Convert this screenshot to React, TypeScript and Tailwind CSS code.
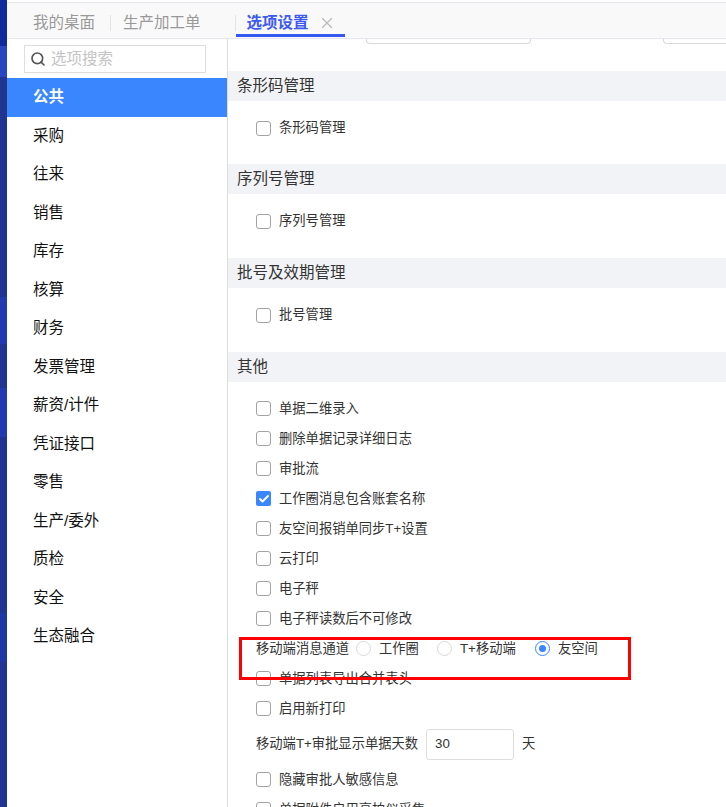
import { Search, X, Check } from "lucide-react";

const navItems = ["采购", "往来", "销售", "库存", "核算", "财务", "发票管理", "薪资/计件", "凭证接口", "零售", "生产/委外", "质检", "安全", "生态融合"];

function Box({ label, checked, flush }: { label: string; checked?: boolean; flush?: boolean }) {
  return (
    <div className="flex h-[30px] items-center gap-2">
      {checked ? (
        <span className="flex h-[15px] w-[15px] items-center justify-center rounded-[2px] bg-[#3a86ff]">
          <Check className="h-3 w-3 text-white" strokeWidth={4} />
        </span>
      ) : (
        <span className="h-[15px] w-[15px] rounded-[3px] border border-[#a3a3a3] bg-white" />
      )}
      <span className={flush ? "" : "pt-px"}>{label}</span>
    </div>
  );
}

function Radio({ label, on, className }: { label: string; on?: boolean; className: string }) {
  return (
    <div className={`flex items-center gap-2 ${className}`}>
      {on ? (
        <span className="flex h-[15px] w-[15px] items-center justify-center rounded-full border border-[#3a86ff]">
          <span className="h-[7px] w-[7px] rounded-full bg-[#3a86ff]" />
        </span>
      ) : (
        <span className="h-[15px] w-[15px] rounded-full border border-[#d9d9d9]" />
      )}
      <span>{label}</span>
    </div>
  );
}

function Section({ title, item, className }: { title: string; item: string; className: string }) {
  return (
    <div className={className}>
      <div className="flex h-[30px] items-center bg-[#f2f3f7] pl-[9px] text-[15.5px]">{title}</div>
      <div className="pl-7 pt-[12px]">
        <Box label={item} flush />
      </div>
    </div>
  );
}

export default function App() {
  return (
    <div className="flex h-[807px] w-[726px] overflow-hidden bg-white font-['Liberation_Sans','Noto_Sans_CJK_SC',sans-serif] text-[13.3px] text-[#333]">
      {/* left edge of the app menu */}
      <div className="flex w-[7px] shrink-0 flex-col bg-[#20358f]">
        <div className="h-[46px] bg-[#0f2a9c]" />
        <div className="h-[31px] bg-[#2a45c0]" />
        <div className="mt-[220px] h-[47px] bg-[#2339b0]" />
        <div className="mt-[44px] h-[49px] bg-[#2339b0]" />
        <div className="mt-[176px] h-[49px] bg-[#1f37a5]" />
      </div>

      <div className="flex min-w-0 flex-1 flex-col">
        {/* Tabs */}
        <div className="mt-[2px] flex h-[37px] shrink-0 items-center border-y border-[#e6e6ec] bg-[#f9f9f9] pl-[26px] pt-1 text-[15.5px] text-[#999]">
          <span>我的桌面</span>
          <span className="ml-[15px] mr-[12px] h-[16px] w-px bg-[#e3e3e3]" />
          <span>生产加工单</span>
          <span className="ml-[34px] h-[16px] w-px bg-[#e3e3e3]" />
          <div className="relative flex h-full w-[109px] items-center pl-[11px] font-bold text-[#3d5af1]">
            <span>选项设置</span>
            <X className="ml-[9px] h-[18px] w-[18px] text-[#bbb]" strokeWidth={1.75} />
            <span className="absolute bottom-[1px] left-0 h-[3px] w-full bg-[#3558f0]" />
          </div>
        </div>

        <div className="flex min-h-0 flex-1">
          {/* Side nav */}
          <aside className="w-[221px] shrink-0 border-r border-[#dcdcdc]">
            <div className="flex h-[39px] items-center pl-[17px]">
              <div className="flex h-[28px] w-[182px] items-center gap-[5px] border border-[#dedede] pl-[5px] text-[#c4c4c4]">
                <Search className="h-4 w-4 text-[#555]" strokeWidth={2.5} />
                <span className="text-[15.5px]">选项搜索</span>
              </div>
            </div>
            <div className="flex h-[39px] items-center bg-[#3a86ff] pb-[2px] pl-[26px] text-[15.5px] font-bold text-white">公共</div>
            {navItems.map((item) => (
              <div key={item} className="flex h-[38.5px] items-center pb-[2px] pl-[26px] text-[15.5px] text-[#111]">
                {item}
              </div>
            ))}
          </aside>

          {/* Options */}
          <main className="relative min-w-0 flex-1 overflow-hidden">
            <div className="flex h-[32px] items-start">
              <div className="ml-[138px] h-[5px] w-[165px] shrink-0 rounded-b-[4px] border-x border-b border-[#d9d9d9]" />
              <div className="ml-[132px] h-[5px] w-[70px] shrink-0 rounded-bl-[4px] border-b border-l border-[#d9d9d9]" />
            </div>
            <Section title="条形码管理" item="条形码管理" className="h-[93px]" />
            <Section title="序列号管理" item="序列号管理" className="h-[94px]" />
            <Section title="批号及效期管理" item="批号管理" className="h-[94px]" />
            <div className="flex h-[30px] items-center bg-[#f2f3f7] pl-[9px] text-[15.5px]">其他</div>
            <div className="pl-7 pt-[11.5px]">
              <Box label="单据二维录入" />
              <Box label="删除单据记录详细日志" />
              <Box label="审批流" />
              <Box label="工作圈消息包含账套名称" checked />
              <Box label="友空间报销单同步T+设置" />
              <Box label="云打印" />
              <Box label="电子秤" />
              <Box label="电子秤读数后不可修改" />
            </div>
            <div className="flex h-[30px] items-center pl-7">
              <span className="w-[100px]">移动端消息通道</span>
              <Radio label="工作圈" className="w-[81px]" />
              <Radio label="T+移动端" className="w-[98px]" />
              <Radio label="友空间" on className="" />
            </div>
            <div className="pl-7">
              <Box label="单据列表导出合并表头" />
              <Box label="启用新打印" />
              <div className="flex h-[41px] items-center">
                <span className="w-[170px]">移动端T+审批显示单据天数</span>
                <span className="flex h-[31px] w-[88px] items-center rounded-[3px] border border-[#dedede] pl-2">30</span>
                <span className="ml-2">天</span>
              </div>
              <Box label="隐藏审批人敏感信息" />
              <Box label="单据附件启用高拍仪采集" />
            </div>
            {/* red annotation drawn over the screenshot */}
            <div className="absolute left-[11px] top-[598px] h-[43px] w-[392px] border-[3px] border-[#f00]" />
          </main>
        </div>
      </div>
    </div>
  );
}
